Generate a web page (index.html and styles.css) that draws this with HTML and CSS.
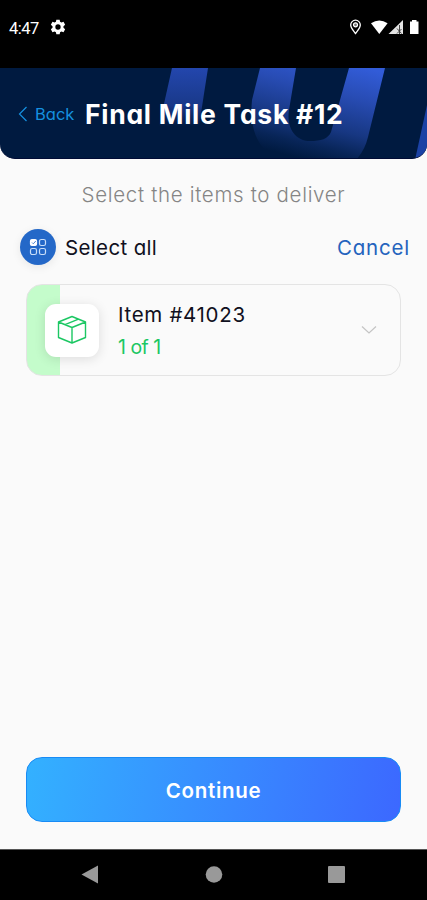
FILE: index.html
```html
<!DOCTYPE html>
<html lang="en">
<head>
<meta charset="utf-8">
<meta name="viewport" content="width=device-width, initial-scale=1">
<title>Final Mile Task</title>
<link rel="stylesheet" href="styles.css">
</head>
<body>
<div class="screen">
  <div class="status">
    <span class="time">4:47</span>
    <svg class="gear" width="16" height="16" viewBox="0 0 24 24"><path fill="#fff" fill-rule="evenodd" d="M9.500 1h5l.6 3.200 2 1.200 3.200-1.100 2.400 4.200-2.500 2.200v2.600l2.500 2.200-2.400 4.200-3.200-1.100-2 1.200-.6 3.200h-5l-.6-3.200-2-1.200-3.200 1.100-2.400-4.200 2.500-2.200v-2.600L1.300 8.500l2.400-4.200 3.200 1.100 2-1.200zM12 8a4 4 0 1 0 0 8 4 4 0 0 0 0-8z"/></svg>
    <svg class="indicators" width="72" height="16" viewBox="0 0 72 16">
      <path d="M7.500 14.500C5 11 2.700 8.800 2.700 6a4.800 4.800 0 0 1 9.600 0c0 2.800-2.300 5-4.800 8.500z" fill="none" stroke="#fff" stroke-width="1.300"/>
      <circle cx="7.500" cy="5.800" r="2" fill="#777" stroke="#fff" stroke-width="1.200"/>
      <path d="M23 4.200Q31.300-1 39.600 4.200L31.300 15z" fill="#fff"/>
      <path d="M40.500 15 55 1v14z" fill="#e4e4e4"/>
      <path d="M51.500 6v9M49 9.500l4.500 5m0-4.500-4.500 4.500" stroke="#333" stroke-width=".9"/>
      <path d="M62 2.500h2V1h4.500v1.500h2V15H62z" fill="#fff"/>
    </svg>
  </div>
  <header class="header">
    <svg class="pattern" width="427" height="92" viewBox="0 0 427 92">
      <defs>
        <linearGradient id="band" x1="365" y1="0" x2="340" y2="100" gradientUnits="userSpaceOnUse"><stop offset="0" stop-color="#325cd8"/><stop offset=".3" stop-color="#284cb4"/><stop offset=".65" stop-color="#173782"/><stop offset=".85" stop-color="#082558"/><stop offset="1" stop-color="#001a40"/></linearGradient>
        <linearGradient id="left" x1="0" y1="0" x2="0" y2="58" gradientUnits="userSpaceOnUse"><stop offset="0" stop-color="#2346ad"/><stop offset=".65" stop-color="#193989"/><stop offset="1" stop-color="#001a40"/></linearGradient>
      </defs>
      <path d="M172 0h36l-9 58h-40z" fill="url(#left)"/>
      <path d="M260 0h36l-7 42C286 62 297 73 310 73c11 0 18-2 21-9L349 0h36l-17 69q-3 13-12 23h-76C258 82 249 62 252 32z" fill="url(#band)"/>
      <path d="M427 37v55h-12z" fill="#1b42a5"/>
    </svg>
    <a class="back"><svg width="10" height="16" viewBox="0 0 10 16"><path d="M8.500 1 1.500 8l7 7" fill="none" stroke="#1590df" stroke-width="1.200"/></svg><span>Back</span></a>
    <h1 class="title">Final Mile Task #12</h1>
  </header>
  <main class="content">
    <p class="hint"><span>Select the items to deliver</span></p>
    <div class="toolbar">
      <span class="round"><svg width="18" height="18" viewBox="0 0 18 18" fill="none" stroke="#c9def8" stroke-width="1.200"><rect x="1.500" y="1.500" width="6" height="6" rx="1.500" fill="#fff" stroke="#fff"/><path d="m3 4.500 1.300 1.300L6.800 3" stroke="#2869c7" stroke-width=".8"/><rect x="10.500" y="1.500" width="6" height="6" rx="1.800"/><rect x="1.500" y="10.500" width="6" height="6" rx="1.800"/><rect x="10.500" y="10.500" width="6" height="6" rx="1.800"/></svg></span>
      <span class="all">Select all</span>
      <span class="cancel">Cancel</span>
    </div>
    <section class="card">
      <div class="tile"><svg width="30" height="30" viewBox="0 0 30 30" fill="none" stroke="#1cc763" stroke-width="1.400" stroke-linejoin="round"><path d="M15 1.500 28.500 7v15.500L15 28 1.500 22.500V7zM1.500 7 15 12.500 28.500 7M15 12.500V28M8 9.700l13.500-5.500"/></svg></div>
      <div class="info"><span class="name">Item #41023</span><span class="count">1 of 1</span></div>
      <svg class="chevron" width="16" height="10" viewBox="0 0 16 10"><path d="m1 1.500 7 6.500 7-6.500" fill="none" stroke="#c4c4c4" stroke-width="1.200"/></svg>
    </section>
    <button class="continue"><span>Continue</span></button>
  </main>
  <nav class="nav">
    <svg width="427" height="50" viewBox="0 0 427 50" fill="#999"><path d="M81.500 24.500 98 15.500v18z"/><circle cx="214" cy="24.500" r="8.300"/><rect x="328" y="16" width="17" height="17" rx="1"/></svg>
  </nav>
</div>
</body>
</html>
```
FILE: styles.css
```css
* { box-sizing: border-box; }
body { margin: 0; background: #fafafa; font-family: Inter, "Open Sans", sans-serif; font-feature-settings: "cv11" 1; color: #101020; }
.screen { width: 427px; height: 900px; display: flex; flex-direction: column; background: #fafafa; overflow: hidden; }
.status { height: 68px; flex: none; background: #000; display: flex; align-items: flex-start; padding: 19px 7px 0 9px; }
.time { font: 400 16.500px/19px Roboto, sans-serif; color: #fff; width: 41px; white-space: nowrap; letter-spacing: -.5px; }
.gear { display: block; }
.indicators { margin-left: auto; display: block; }
.header { position: relative; height: 91px; flex: none; background: #001a40; border-radius: 0 0 15px 15px; border-bottom: 1px solid #000b35; overflow: hidden; display: flex; align-items: center; padding: 2px 0 0 18px; }
.pattern { position: absolute; left: 0; top: 0; }
.back { position: relative; display: flex; align-items: center; gap: 7px; width: 67px; color: #1590df; font-size: 16.500px; white-space: nowrap; }
.title { position: relative; margin: 0; color: #fff; font-size: 26.500px; line-height: 32px; font-weight: 700; letter-spacing: .73px; white-space: nowrap; }
.content { flex: 1; display: flex; flex-direction: column; padding: 20px 26px 27px; }
.hint { margin: 0; text-align: center; font-size: 20.500px; line-height: 32px; font-weight: 300; letter-spacing: .68px; color: #858585; white-space: nowrap; }
.toolbar { display: flex; align-items: center; height: 36px; margin: 18px -9px 0 -6px; font-size: 20.500px; white-space: nowrap; }
.round { width: 36px; height: 36px; border-radius: 50%; background: #2468c8; display: grid; place-items: center; margin-right: 9px; box-shadow: 0 2px 10px #00000014; }
.all { letter-spacing: .35px; }
.cancel { margin-left: auto; color: #2463bd; letter-spacing: .8px; }
.card { height: 92px; margin-top: 19px; border: 1px solid #e4e4e4; border-radius: 16px; display: flex; align-items: center; padding: 0 23px 0 18px; background: linear-gradient(90deg, #c4fccb 33px, #fafafa 33px); }
.tile { width: 54px; height: 53px; border-radius: 11px; background: #fff; display: grid; place-items: center; box-shadow: 0 2px 12px #0000001f; }
.info { margin-left: 19px; padding-top: 2px; display: flex; flex-direction: column; font-size: 20.500px; line-height: 32px; white-space: nowrap; }
.name { letter-spacing: .68px; }
.count { color: #1cc763; font-size: 19.500px; letter-spacing: -.5px; }
.chevron { margin-left: auto; }
.continue { margin-top: auto; width: 375px; height: 65px; flex: none; border: 1px solid #188bf5; border-radius: 16px; background: linear-gradient(100deg, #33b1ff, #3c68ff); color: #fff; font: 600 20.500px/24px Inter, sans-serif; font-feature-settings: "cv11" 1; letter-spacing: .68px; padding: 2px 0 0; }
.nav { height: 51px; flex: none; background: #000; border-top: 1px solid #555; }
.nav svg { display: block; }
```
